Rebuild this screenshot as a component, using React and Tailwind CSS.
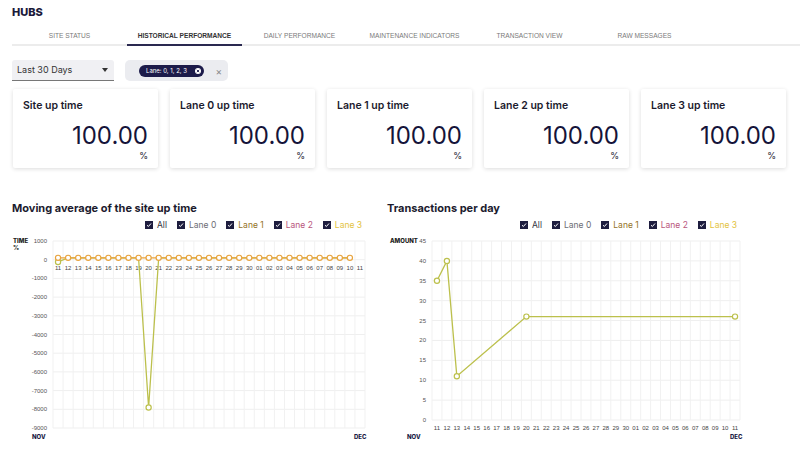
import React from 'react';

const FONT = { fontFamily: 'Inter, "Noto Sans", sans-serif' };
const NAVY = '#1b1a45';
const GREEN = '#bcc04c';
const ORANGE = '#e8a33d';

const tabs = ['SITE STATUS', 'HISTORICAL PERFORMANCE', 'DAILY PERFORMANCE', 'MAINTENANCE INDICATORS', 'TRANSACTION VIEW', 'RAW MESSAGES'];
const cards = ['Site up time', 'Lane 0 up time', 'Lane 1 up time', 'Lane 2 up time', 'Lane 3 up time'];
const dates = [];
for (let d = 11; d <= 30; d++) dates.push(String(d));
for (let d = 1; d <= 11; d++) dates.push(String(d).padStart(2, '0'));

const legend = [
  { label: 'All', color: 'text-[#333340]' },
  { label: 'Lane 0', color: 'text-[#6d6d75]' },
  { label: 'Lane 1', color: 'text-[#94721f]' },
  { label: 'Lane 2', color: 'text-[#b9567c]' },
  { label: 'Lane 3', color: 'text-[#e3c33f]' },
];

const Legend = () => (
  <div className="flex items-center gap-[10px] ml-[133px] mt-[4px] h-[12px]">
    {legend.map((l) => (
      <div key={l.label} className="flex items-center gap-[4px]">
        <span className="w-[8px] h-[8px] bg-[#1e1d3f] flex items-center justify-center">
          <svg width="6" height="6" viewBox="0 0 6 6">
            <path d="M1 3.2 L2.4 4.5 L5 1.5" stroke="#fff" strokeWidth="1" fill="none" />
          </svg>
        </span>
        <span className={`text-[8.5px] leading-none ${l.color}`}>{l.label}</span>
      </div>
    ))}
  </div>
);

const Chart = ({ width, plotL, plotR, top, bottom, yTicks, yMin, yMax, axisTitle, axisTitle2, yLabelX, series, xLabelY }) => {
  const n = dates.length;
  const colW = (plotR - plotL) / n;
  const xAt = (i) => plotL + colW * (i + 0.5);
  const yAt = (v) => top + ((yMax - v) / (yMax - yMin)) * (bottom - top);
  return (
    <svg width={width} height="212" className="block">
      {yTicks.map((t) => (
        <line key={'h' + t} x1={plotL} x2={plotR} y1={yAt(t)} y2={yAt(t)} stroke="#efefef" strokeWidth="1" />
      ))}
      {Array.from({ length: n + 1 }).map((_, k) => (
        <line key={'v' + k} x1={plotL + colW * k} x2={plotL + colW * k} y1={top} y2={bottom} stroke="#f1f1f1" strokeWidth="1" />
      ))}
      {yTicks.map((t) => (
        <text key={'y' + t} x={yLabelX} y={yAt(t) + 2} fontSize="6" textAnchor="end" fill="#555" fontFamily="Liberation Sans, Arial, sans-serif">
          {t}
        </text>
      ))}
      {dates.map((d, i) => (
        <text key={'x' + i} x={xAt(i)} y={xLabelY} fontSize="6" textAnchor="middle" fill="#444" fontFamily="Liberation Sans, Arial, sans-serif">
          {d}
        </text>
      ))}
      <text x={axisTitle.x} y={9} fontSize="6" fontWeight="800" fill="#222" fontFamily="Inter, sans-serif">{axisTitle.text}</text>
      {axisTitle2 && (
        <text x={axisTitle2.x} y={16} fontSize="6" fontWeight="800" fill="#222" fontFamily="Inter, sans-serif">{axisTitle2.text}</text>
      )}
      <text x={axisTitle.nov} y={205} fontSize="6" fontWeight="800" fill={NAVY} fontFamily="Inter, sans-serif">NOV</text>
      <text x={axisTitle.dec} y={205} fontSize="6" fontWeight="800" fill={NAVY} fontFamily="Inter, sans-serif">DEC</text>
      {series.map((s, si) => (
        <g key={si}>
          <polyline points={s.points.map(([i, v]) => `${xAt(i)},${yAt(v)}`).join(' ')} fill="none" stroke={s.color} strokeWidth="1.3" />
          {s.dots.map(([i, v]) => (
            <circle key={i} cx={xAt(i)} cy={yAt(v)} r="2.6" fill="#fff" stroke={s.color} strokeWidth="1.2" />
          ))}
        </g>
      ))}
    </svg>
  );
};

const leftGreen = [];
for (let i = 0; i < 30; i++) leftGreen.push([i, i === 9 ? -7900 : i === 0 ? -120 : 100]);
const leftOrange = [];
for (let i = 0; i < 30; i++) leftOrange.push([i, 100]);
const rightPts = [[0, 35], [1, 40], [2, 11], [9, 26], [30, 26]];

export default function App() {
  return (
    <div className="w-[800px] h-[458px] bg-white overflow-hidden" style={FONT}>
      <div className="pl-3 pt-[7px] text-[11px] leading-[11px] font-extrabold text-[#1b1a3a]">HUBS</div>

      <div className="ml-3 mt-[10px] flex border-b-2 border-[#ececec]" style={{ fontFamily: '"Liberation Sans", Arial, sans-serif' }}>
        {tabs.map((t, i) => (
          <div
            key={t}
            className={`w-[115px] h-[18px] -mb-[2px] text-center text-[6.6px] leading-[16px] border-b-2 ${i === 1 ? 'border-[#2a2950] text-[#333] font-bold' : 'border-transparent text-[#7a7a7a]'}`}
          >
            {t}
          </div>
        ))}
      </div>

      <div className="flex items-center gap-[11px] ml-3 mt-[14px]">
        <div className="w-[102px] h-[21px] bg-[#f0f0f3] rounded-t-[3px] border-b border-[#777] flex items-center justify-between pl-[5px] pr-[6px]">
          <span className="text-[9px] text-[#333]">Last 30 Days</span>
          <span className="w-0 h-0 border-l-[3px] border-r-[3px] border-t-[4px] border-l-transparent border-r-transparent border-t-[#333]" />
        </div>
        <div className="w-[103px] h-[21px] bg-[#ebecf0] rounded-[5px] flex items-center pl-[14px] pr-[6px]">
          <div className="h-[12px] w-[65px] rounded-full bg-[#1c1b4a] flex items-center justify-between pl-[7px] pr-[3px]">
            <span className="text-[6px] text-white leading-none">Lane: 0, 1, 2, 3</span>
            <svg width="6" height="6" viewBox="0 0 6 6">
              <circle cx="3" cy="3" r="3" fill="#fff" />
              <path d="M1.8 1.8 L4.2 4.2 M4.2 1.8 L1.8 4.2" stroke="#1c1b4a" strokeWidth="0.9" />
            </svg>
          </div>
          <span className="ml-auto text-[10px] leading-none text-[#888]">×</span>
        </div>
      </div>

      <div className="flex gap-[12px] ml-[13px] mt-[8px]">
        {cards.map((c) => (
          <div key={c} className="w-[145px] h-[79px] bg-white rounded-[2px] shadow-[0_1px_4px_rgba(0,0,0,0.14)] px-[10px] pt-[10px] flex flex-col">
            <div className="text-[10.5px] leading-[14px] font-semibold text-[#1c1b2e]">{c}</div>
            <div className="mt-[11px] text-right text-[24px] leading-[24px] text-[#15143a]">100.00</div>
            <div className="text-right text-[9px] leading-[10px] text-[#222233] mt-[3px]">%</div>
          </div>
        ))}
      </div>

      <div className="flex pl-3 mt-[33px]">
        <div className="w-[375px]">
          <div className="text-[11px] leading-[14px] font-bold text-[#1c1b2e]">Moving average of the site up time</div>
          <Legend />
          <div className="mt-[3px]">
            <Chart
              width={375}
              plotL={41}
              plotR={353}
              top={7}
              bottom={194}
              yTicks={[1000, 0, -1000, -2000, -3000, -4000, -5000, -6000, -7000, -8000, -9000]}
              yMin={-9000}
              yMax={1000}
              yLabelX={35}
              xLabelY={36}
              axisTitle={{ text: 'TIME', x: 1, nov: 20, dec: 342 }}
              axisTitle2={{ text: '%', x: 1 }}
              series={[
                { color: GREEN, points: leftGreen, dots: [[0, -120], [9, -7900]] },
                { color: ORANGE, points: leftOrange, dots: leftOrange },
              ]}
            />
          </div>
        </div>
        <div className="w-[401px]">
          <div className="text-[11px] leading-[14px] font-bold text-[#1c1b2e]">Transactions per day</div>
          <Legend />
          <div className="mt-[3px]">
            <Chart
              width={401}
              plotL={45}
              plotR={353}
              top={7}
              bottom={186}
              yTicks={[45, 40, 35, 30, 25, 20, 15, 10, 5, 0]}
              yMin={0}
              yMax={45}
              yLabelX={39}
              xLabelY={196}
              axisTitle={{ text: 'AMOUNT', x: 3, nov: 20, dec: 343 }}
              series={[{ color: GREEN, points: rightPts, dots: rightPts }]}
            />
          </div>
        </div>
      </div>
    </div>
  );
}
